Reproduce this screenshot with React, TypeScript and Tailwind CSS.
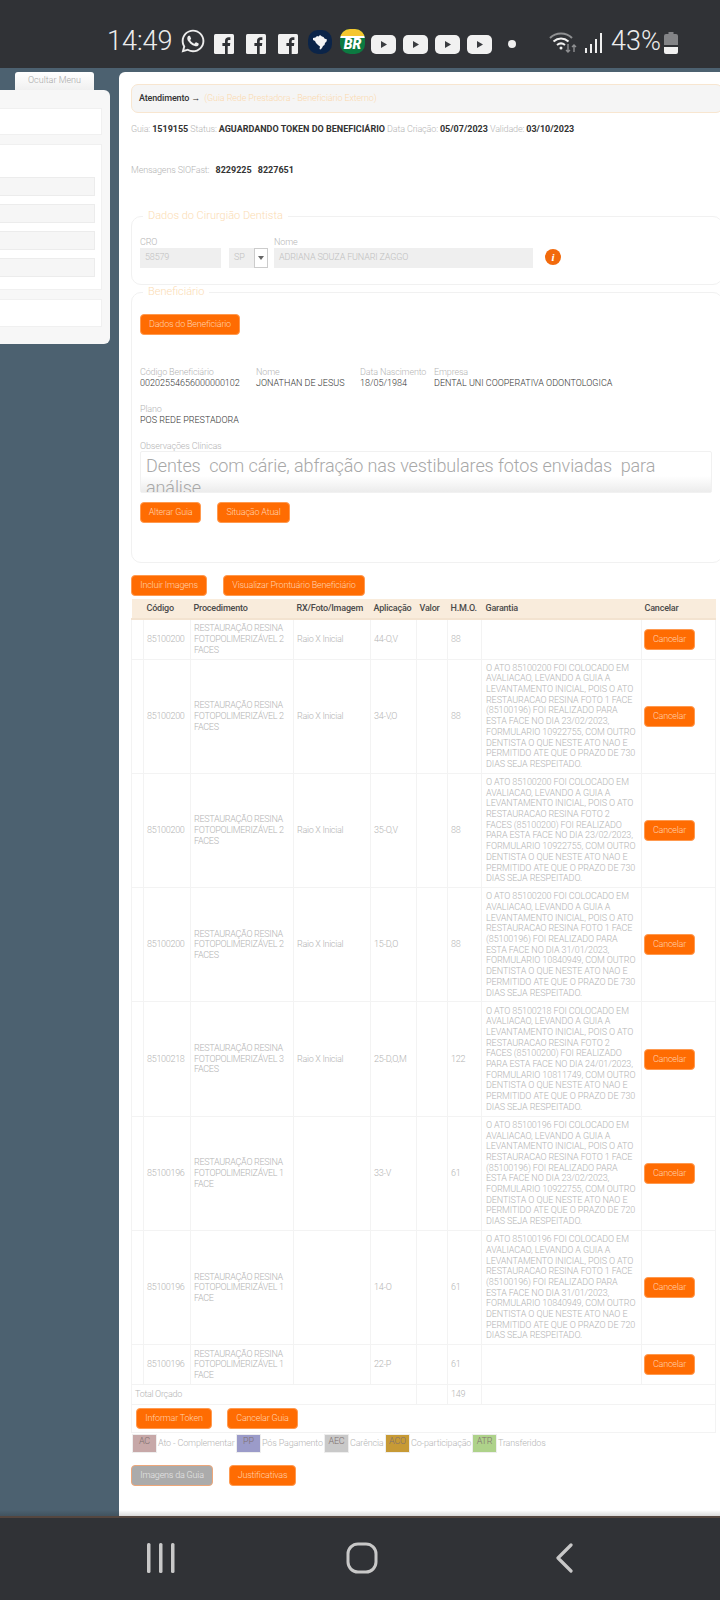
import { ReactNode } from "react";
import { FaWhatsapp } from "react-icons/fa";

const font = { fontFamily: "Roboto, 'Liberation Sans', sans-serif" };

function FbIcon() {
  return (
    <svg viewBox="0 0 20 20" className="h-[20px] w-[20px]">
      <rect width="20" height="20" rx="1.5" fill="#f1f1f1" />
      <path d="M11 20v-8H8.400V9H11V7c0-2.600 1.500-3.800 3.600-3.800.9 0 1.600.1 1.800.1v2.600h-1.300c-1.100 0-1.400.6-1.400 1.400V9h2.600l-.4 3h-2.200v8z" fill="#2f3135" />
    </svg>
  );
}

function YtIcon() {
  return (
    <svg viewBox="0 0 25 19" className="h-[19px] w-[25px]">
      <rect width="25" height="19" rx="5" fill="#f1f1f1" />
      <path d="M10 6l6 3.500-6 3.500z" fill="#3a3c40" />
    </svg>
  );
}

function StatusBar() {
  return (
    <div className="relative flex h-[68px] shrink-0 items-end bg-[#303236] pb-[14px] pl-[107px] text-[#ededed]">
      <span className="w-[74px] text-[27px] font-light leading-[25px]">14:49</span>
      <FaWhatsapp className="h-[26px] w-[26px] -ml-[1px]" />
      <div className="ml-[8px] flex gap-[12px]">
        <FbIcon />
        <FbIcon />
        <FbIcon />
      </div>
      <svg viewBox="0 0 24 24" className="ml-[10px] h-[24px] w-[24px]">
        <rect width="24" height="24" rx="10" fill="#0b2448" />
        <path d="M5 8l2.500-.5L9 6l1.500.5L12 5l2 1.500 1.500.5 1 1.500 2.500 1-.5 2-1.500 1.500-.5 2-1.500 1-1 2-1.500 1.500-1-.5.5-2.500-2-1.500L8 13l-1-2-2-1z" fill="#f4f4f4" />
      </svg>
      <div className="ml-[8px] flex h-[25px] w-[25px] flex-col overflow-hidden rounded-[10px] bg-[#0c7a41]">
        <div className="h-[7px] shrink-0 bg-[#f5c62e]" />
        <div className="h-[2px] shrink-0 bg-white" />
        <div className="-mt-[1px] text-center text-[14px] font-black italic leading-[14px] text-white">BR</div>
      </div>
      <div className="ml-[6px] flex gap-[7px]">
        <YtIcon />
        <YtIcon />
        <YtIcon />
        <YtIcon />
      </div>
      <span className="mb-[6px] ml-[16px] h-[8px] w-[8px] rounded-full bg-[#efefef]" />
      <svg viewBox="0 0 28 24" className="ml-[33px] h-[24px] w-[28px]" fill="none">
        <path d="M1 8c6-6 16-6 22 0" stroke="#8f9092" strokeWidth="2" />
        <path d="M4.500 11.500c4.500-4 10.500-4 15 0" stroke="#f1f1f1" strokeWidth="2" />
        <path d="M8 15c2.500-2 5.500-2 8 0" stroke="#f1f1f1" strokeWidth="2" />
        <circle cx="12" cy="18" r="1.500" fill="#f1f1f1" />
        <path d="M19 14v8m-2-2l2 2 2-2M25 22v-7m-2 2l2-2 2 2" stroke="#8f9092" strokeWidth="1.400" />
      </svg>
      <svg viewBox="0 0 18 20" className="mb-[1px] ml-[7px] h-[20px] w-[18px]" fill="#efefef">
        <rect x="1" y="15" width="2" height="5" />
        <rect x="6" y="11" width="2" height="9" />
        <rect x="11" y="6" width="2" height="14" />
        <rect x="16" y="0" width="2" height="20" />
      </svg>
      <span className="ml-[9px] w-[53px] text-[27px] font-light leading-[25px]">43%</span>
      <svg viewBox="0 0 14 22" className="h-[22px] w-[14px]">
        <path d="M4.500 0h5v2h2.500a2 2 0 012 2v9H0V4a2 2 0 012-2h2.500z" fill="#838487" />
        <path d="M0 15h14v5a2 2 0 01-2 2H2a2 2 0 01-2-2z" fill="#f1f1f1" />
      </svg>
    </div>
  );
}

function NavBar() {
  return (
    <div className="relative flex h-[84px] shrink-0 items-start border-t-2 border-[#54463f] bg-[#303236]">
      <svg viewBox="0 0 28 30" className="ml-[147px] mt-[25px] h-[30px] w-[28px]" fill="#c8c8c8">
        <rect x="0" width="3.500" height="30" rx="1.500" />
        <rect x="12" width="3.500" height="30" rx="1.500" />
        <rect x="24" width="3.500" height="30" rx="1.500" />
      </svg>
      <svg viewBox="0 0 32 32" className="ml-[171px] mt-[24px] h-[32px] w-[32px]" fill="none">
        <rect x="2" y="2" width="28" height="28" rx="10" stroke="#c8c8c8" strokeWidth="3" />
      </svg>
      <svg viewBox="0 0 18 30" className="ml-[177px] mt-[25px] h-[30px] w-[18px]" fill="none">
        <path d="M16 2L3 15l13 13" stroke="#c8c8c8" strokeWidth="3.200" strokeLinecap="round" strokeLinejoin="round" />
      </svg>
    </div>
  );
}

function Btn({ children, className = "" }: { children: ReactNode; className?: string }) {
  return (
    <button className={`flex h-[21px] items-center justify-center whitespace-nowrap rounded-[4px] border border-[#ff9a50] bg-[#ff6c02] text-[9px] font-light tracking-[-0.2px] text-[#ffd2b0] ${className}`}>
      {children}
    </button>
  );
}

function LeftMenu() {
  return (
    <div className="w-[110px] shrink-0 pt-[4px]">
      <div className="ml-[15px] flex h-[18px] w-[79px] items-center justify-center rounded-t-[3px] bg-gradient-to-b from-white to-[#f0f0f0] text-[9px] font-light text-[#a8a8a8]">
        Ocultar Menu
      </div>
      <div className="flex h-[254px] flex-col gap-[9px] rounded-r-[6px] bg-[#f7f7f7] pr-[8px] pt-[18px]">
        <div className="h-[27px] border border-l-0 border-[#f0f0f0] bg-white" />
        <div className="flex h-[146px] flex-col gap-[8px] border border-l-0 border-[#f0f0f0] bg-white pr-[6px] pt-[32px]">
          <div className="h-[19px] border border-l-0 border-[#ececec] bg-[#f6f6f6]" />
          <div className="h-[19px] border border-l-0 border-[#ececec] bg-[#f6f6f6]" />
          <div className="h-[19px] border border-l-0 border-[#ececec] bg-[#f6f6f6]" />
          <div className="h-[19px] border border-l-0 border-[#ececec] bg-[#f6f6f6]" />
        </div>
        <div className="h-[28px] border border-l-0 border-[#f0f0f0] bg-white" />
      </div>
    </div>
  );
}

function Field({ label, value, className = "" }: { label: string; value: string; className?: string }) {
  return (
    <div className={className}>
      <div className="text-[9px] font-light leading-[11px] text-[#b5b5b5]">{label}</div>
      <div className="whitespace-nowrap text-[9px] leading-[11px] tracking-normal text-[#333]">{value}</div>
    </div>
  );
}

const garantia = (ato: string, foto: string, dia: string, form: string, prazo: string) =>
  `O ATO ${ato} FOI COLOCADO EM AVALIACAO, LEVANDO A GUIA A LEVANTAMENTO INICIAL, POIS O ATO RESTAURACAO RESINA FOTO ${foto} FOI REALIZADO PARA ESTA FACE NO DIA ${dia}, FORMULARIO ${form}, COM OUTRO DENTISTA O QUE NESTE ATO NAO E PERMITIDO ATE QUE O PRAZO DE ${prazo} DIAS SEJA RESPEITADO.`;

const PROC2 = "RESTAURAÇÃO RESINA FOTOPOLIMERIZÁVEL 2 FACES";
const PROC3 = "RESTAURAÇÃO RESINA FOTOPOLIMERIZÁVEL 3 FACES";
const PROC1 = "RESTAURAÇÃO RESINA FOTOPOLIMERIZÁVEL 1 FACE";

const rows = [
  { cod: "85100200", proc: PROC2, rx: "Raio X Inicial", app: "44-O,V", hmo: "88", g: "" },
  { cod: "85100200", proc: PROC2, rx: "Raio X Inicial", app: "34-V,O", hmo: "88", g: garantia("85100200", "1 FACE (85100196)", "23/02/2023", "10922755", "730") },
  { cod: "85100200", proc: PROC2, rx: "Raio X Inicial", app: "35-O,V", hmo: "88", g: garantia("85100200", "2 FACES (85100200)", "23/02/2023", "10922755", "730") },
  { cod: "85100200", proc: PROC2, rx: "Raio X Inicial", app: "15-D,O", hmo: "88", g: garantia("85100200", "1 FACE (85100196)", "31/01/2023", "10840949", "730") },
  { cod: "85100218", proc: PROC3, rx: "Raio X Inicial", app: "25-D,O,M", hmo: "122", g: garantia("85100218", "2 FACES (85100200)", "24/01/2023", "10811749", "730") },
  { cod: "85100196", proc: PROC1, rx: "", app: "33-V", hmo: "61", g: garantia("85100196", "1 FACE (85100196)", "23/02/2023", "10922755", "720") },
  { cod: "85100196", proc: PROC1, rx: "", app: "14-O", hmo: "61", g: garantia("85100196", "1 FACE (85100196)", "31/01/2023", "10840949", "720") },
  { cod: "85100196", proc: PROC1, rx: "", app: "22-P", hmo: "61", g: "" },
];

const cell = "border border-[#f3f3f3] px-[3px] align-middle";

function ProcTable() {
  return (
    <table className="mt-[3px] w-[584px] table-fixed border-collapse text-[9px] font-light leading-[10.700px] tracking-[-0.3px] text-[#b4b4b4]">
      <colgroup>
        <col className="w-[12px]" />
        <col className="w-[47px]" />
        <col className="w-[103px]" />
        <col className="w-[77px]" />
        <col className="w-[46px]" />
        <col className="w-[31px]" />
        <col className="w-[34px]" />
        <col className="w-[160px]" />
        <col className="w-[74px]" />
      </colgroup>
      <thead>
        <tr className="h-[20px] border-b-2 border-[#f3e3d0] bg-[#f9ecdc] text-left tracking-[-0.2px] text-[#4a4a4a]">
          <th className="px-[3px] font-medium" />
          <th className="px-[3px] font-medium">Código</th>
          <th className="px-[3px] font-medium">Procedimento</th>
          <th className="whitespace-nowrap px-[3px] font-medium">RX/Foto/Imagem</th>
          <th className="px-[3px] font-medium">Aplicação</th>
          <th className="px-[3px] font-medium">Valor</th>
          <th className="whitespace-nowrap px-[3px] font-medium">H.M.O.</th>
          <th className="px-[4px] font-medium">Garantia</th>
          <th className="px-[3px] font-medium">Cancelar</th>
        </tr>
      </thead>
      <tbody>
        {rows.map((r, i) => (
          <tr key={i} className={r.g ? "h-[114.300px]" : "h-[40px]"}>
            <td className={cell} />
            <td className={cell}>{r.cod}</td>
            <td className={cell}>{r.proc}</td>
            <td className={cell}>{r.rx}</td>
            <td className={cell}>{r.app}</td>
            <td className={cell} />
            <td className={cell}>{r.hmo}</td>
            <td className="border border-[#f3f3f3] px-[4px] align-middle tracking-[-0.1px]">{r.g}</td>
            <td className="border border-[#f3f3f3] pl-[2px] align-middle">
              <Btn className="w-[51px]">Cancelar</Btn>
            </td>
          </tr>
        ))}
        <tr className="h-[20px]">
          <td className={cell} colSpan={5}>Total Orçado</td>
          <td className={cell} />
          <td className={cell}>149</td>
          <td className={cell} colSpan={2} />
        </tr>
        <tr className="h-[28px]">
          <td className={cell} colSpan={9}>
            <div className="flex gap-[15px] pl-[1px]">
              <Btn className="w-[76px]">Informar Token</Btn>
              <Btn className="w-[71px]">Cancelar Guia</Btn>
            </div>
          </td>
        </tr>
      </tbody>
    </table>
  );
}

const legend = [
  { sigla: "AC", nome: "Ato - Complementar", swatch: "bg-[#c7a8a8]", width: "w-[77px]" },
  { sigla: "PP", nome: "Pós Pagamento", swatch: "bg-[#9b9bc9]", width: "w-[61px]" },
  { sigla: "AEC", nome: "Carência", swatch: "bg-[#c9c9c9]", width: "w-[34px]" },
  { sigla: "ACO", nome: "Co-participação", swatch: "bg-[#c79a35]", width: "w-[60px]" },
  { sigla: "ATR", nome: "Transferidos", swatch: "bg-[#aed28a]", width: "w-[60px]" },
];

function MainPanel() {
  return (
    <div className="relative mt-[4px] min-w-0 flex-1 rounded-tl-[6px] bg-white pl-[12px] pt-[12px] text-[9px] font-light tracking-[-0.15px] text-[#b5b5b5]">
      <div className="-mr-[3px] flex h-[29px] items-center rounded-[7px] border border-[#f8e6d0] bg-[#f5f5f5] pl-[7px]">
        <span className="font-medium text-[#333]">Atendimento →&nbsp;&nbsp;</span>
        <span className="tracking-[-0.1px] text-[#fbd9ae]">(Guia Rede Prestadora - Beneficiário Externo)</span>
      </div>
      <div className="mt-[10px] h-[12px] whitespace-nowrap leading-[12px]">
        Guia: <b className="font-bold tracking-normal text-[#333]">1519155</b> Status: <b className="font-bold tracking-normal text-[#333]">AGUARDANDO TOKEN DO BENEFICIÁRIO</b> Data Criação: <b className="font-bold tracking-normal text-[#333]">05/07/2023</b> Validade: <b className="font-bold tracking-normal text-[#333]">03/10/2023</b>
      </div>
      <div className="mt-[29px] h-[12px] whitespace-nowrap leading-[12px]">
        Mensagens SIOFast: &nbsp;&nbsp;<b className="font-bold tracking-normal text-[#333]">8229225</b> &nbsp;<b className="ml-[2px] font-bold tracking-normal text-[#333]">8227651</b>
      </div>

      <fieldset className="-mr-[3px] mt-[33px] h-[76px] rounded-[10px] border border-[#f1f1f1] pl-[8px]">
        <legend className="ml-[3px] px-[5px] text-[11px] leading-[14px] tracking-normal text-[#fbdcb4]">Dados do Cirurgião Dentista</legend>
        <div className="mt-[14px] flex items-end">
          <div className="w-[81px]">
            <div className="leading-[11px]">CRO</div>
            <div className="flex h-[20px] items-center bg-[#efefef] pl-[5px] text-[#c0c0c0]">58579</div>
          </div>
          <div className="ml-[8px] flex h-[20px] w-[39px] items-center bg-[#efefef] pl-[5px] text-[#c0c0c0]">
            SP
            <span className="ml-auto flex h-[20px] w-[14px] items-center justify-center border border-[#ccc] bg-white">
              <span className="border-x-[3px] border-t-[4px] border-x-transparent border-t-[#666]" />
            </span>
          </div>
          <div className="ml-[6px] w-[259px]">
            <div className="leading-[11px]">Nome</div>
            <div className="flex h-[20px] items-center bg-[#efefef] pl-[5px] text-[#c0c0c0]">ADRIANA SOUZA FUNARI ZAGGO</div>
          </div>
          <span className="mb-[3px] ml-[12px] flex h-[16px] w-[16px] items-center justify-center rounded-full bg-[#f26a0c] text-[11px] font-bold italic text-white" style={{ fontFamily: "'Liberation Serif', serif" }}>i</span>
        </div>
      </fieldset>

      <fieldset className="-mr-[3px] h-[278px] rounded-[10px] border border-[#f1f1f1] pl-[8px]">
        <legend className="ml-[3px] px-[5px] text-[11px] leading-[14px] tracking-normal text-[#fbdcb4]">Beneficiário</legend>
        <Btn className="mt-[15px] w-[100px]">Dados do Beneficiário</Btn>
        <div className="mt-[32px] flex">
          <Field label="Código Beneficiário" value="00202554656000000102" className="w-[116px]" />
          <Field label="Nome" value="JONATHAN DE JESUS" className="w-[104px]" />
          <Field label="Data Nascimento" value="18/05/1984" className="w-[74px]" />
          <Field label="Empresa" value="DENTAL UNI COOPERATIVA ODONTOLOGICA" />
        </div>
        <Field label="Plano" value="POS REDE PRESTADORA" className="mt-[15px]" />
        <div className="mt-[15px] leading-[10px]">Observações Clínicas</div>
        <div className="mr-[10px] h-[42px] overflow-hidden rounded-[2px] border border-[#f1f1f1] bg-gradient-to-b from-white from-60% to-[#ececec] pl-[5px] pt-[3px] text-[18px] leading-[22px] tracking-[-0.1px] text-[#a8a8a8]">
          Dentes&nbsp; com cárie, abfração nas vestibulares fotos enviadas&nbsp; para análise
        </div>
        <div className="mt-[9px] flex gap-[16px]">
          <Btn className="w-[61px]">Alterar Guia</Btn>
          <Btn className="w-[73px]">Situação Atual</Btn>
        </div>
      </fieldset>

      <div className="mt-[12px] flex gap-[16px]">
        <Btn className="w-[76px]">Incluir Imagens</Btn>
        <Btn className="w-[142px]">Visualizar Prontuário Beneficiário</Btn>
      </div>

      <ProcTable />

      <div className="mt-[1px] flex items-center leading-[19px]">
        {legend.map((l) => (
          <div key={l.sigla} className="flex items-center">
            <span className={`ml-[1px] h-[19px] w-[25px] border border-[#eee] pb-[3px] text-center leading-[12px] text-[#80706f] ${l.swatch}`}>{l.sigla}</span>
            <span className={`ml-[1px] whitespace-nowrap ${l.width}`}>{l.nome}</span>
          </div>
        ))}
      </div>

      <div className="mt-[12px] flex gap-[16px]">
        <Btn className="w-[82px] !border-[#eda77a] !bg-[#ababab] !text-[#e6e6e6]">Imagens da Guia</Btn>
        <Btn className="w-[67px]">Justificativas</Btn>
      </div>
    </div>
  );
}

export default function App() {
  return (
    <div className="flex h-[1600px] w-[720px] flex-col overflow-hidden" style={font}>
      <StatusBar />
      <div className="relative flex min-h-0 flex-1 bg-[#4c6170]">
        <LeftMenu />
        <div className="w-[9px] shrink-0" />
        <MainPanel />
        <div className="absolute inset-x-0 bottom-0 h-[6px] bg-gradient-to-b from-transparent to-black/15" />
      </div>
      <NavBar />
    </div>
  );
}
